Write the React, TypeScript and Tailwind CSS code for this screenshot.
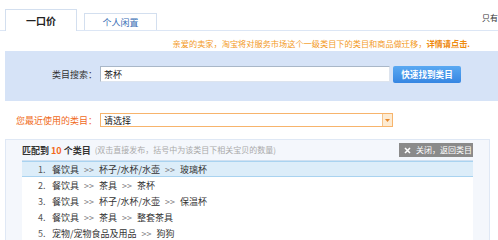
const rows = [
  ['餐饮具', '杯子/水杯/水壶', '玻璃杯'],
  ['餐饮具', '茶具', '茶杯'],
  ['餐饮具', '杯子/水杯/水壶', '保温杯'],
  ['餐饮具', '茶具', '整套茶具'],
  ['宠物/宠物食品及用品', '狗狗'],
];

export default function App() {
  return (
    <div
      className="relative h-[240px] w-[498px] overflow-hidden bg-white text-[9px] leading-none text-[#333]"
      style={{ fontFamily: '"Noto Sans CJK SC", "Noto Sans", sans-serif' }}
    >
      {/* tabs */}
      <div className="flex h-[31px] items-end border-b border-[#dce6f5] pl-[5px]">
        <div className="-mb-px flex h-[22px] w-[72px] items-center justify-center border border-b-0 border-[#d3dfef] bg-white text-[10px] font-bold text-[#222]">
          一口价
        </div>
        <div className="ml-[7px] flex h-[17px] w-[73px] items-center justify-center border border-b-0 border-[#d3dfef] bg-white text-[#3a6fb5]">
          个人闲置
        </div>
        <div className="ml-auto mb-[8px] whitespace-nowrap text-[8px] text-[#333]">只有</div>
      </div>

      {/* notice */}
      <div className="mt-[4px] flex h-[16px] items-center justify-end pr-[28px] text-[8.2px] text-[#f39a1e]">
        亲爱的卖家，淘宝将对服务市场这个一级类目下的类目和商品做迁移，
        <span className="font-bold text-[#ee8a10]">详情请点击.</span>
      </div>

      {/* search */}
      <div className="ml-[5px] flex h-[50px] items-start bg-[#d6e3f7] pt-[15px]">
        <div className="flex h-[16px] w-[95px] items-center justify-end pr-[3px] text-[#333]">类目搜索：</div>
        <div className="flex h-[16px] w-[290px] items-center border border-[#a9b7c8] border-b-[#dde4ee] border-r-[#dde4ee] bg-white pl-[3px] text-[#222]">
          茶杯
        </div>
        <div className="ml-[3px] flex h-[17px] w-[68px] items-center justify-center rounded-[2px] bg-gradient-to-b from-[#5aa9f2] to-[#3686e2] text-[8.6px] font-bold text-white">
          快速找到类目
        </div>
      </div>

      {/* recent */}
      <div className="flex h-[38px] items-center">
        <div className="flex w-[100px] justify-end pr-[3px] text-[#f06a22]">您最近使用的类目：</div>
        <div className="flex h-[14px] w-[293px] items-center justify-between border border-[#f7b46c] bg-white pl-[3px] text-[#222]">
          请选择
          <div className="flex h-[12px] w-[10px] items-center justify-center border-l border-[#f7c48a] bg-[#fdebd2]">
            <svg width="5" height="3" viewBox="0 0 5 3">
              <path d="M0 0h5L2.5 3z" fill="#e8892b" />
            </svg>
          </div>
        </div>
      </div>

      {/* results */}
      <div className="ml-[5px] h-[110px] w-[485px] border border-[#dfe8f5] bg-[#f4f7fc]">
        <div className="flex h-[20px] items-center justify-between pl-[16px] pr-[16px]">
          <div className="flex items-center">
            <span className="font-bold text-[#333]">匹配到</span>
            <span className="mx-[2px] font-bold text-[#f26a1c]">10</span>
            <span className="font-bold text-[#333]">个类目</span>
            <span className="ml-[4px] text-[8px] text-[#aaa]">(双击直接发布，括号中为该类目下相关宝贝的数量)</span>
          </div>
          <div className="flex h-[14px] w-[74px] items-center gap-[5px] whitespace-nowrap bg-[#8a8a8a] pl-[5px] text-[8px] text-white">
            <svg width="7" height="7" viewBox="0 0 7 7">
              <path d="M1 1l5 5M6 1L1 6" stroke="#fff" strokeWidth="1.6" />
            </svg>
            关闭，返回类目
          </div>
        </div>
        <div className="mx-[16px] border-t border-[#cfe0f1] bg-white">
          {rows.map((r, i) => (
            <div
              key={i}
              className={`flex h-[16px] items-center pl-[16px] ${
                i === 0 ? 'border-y border-[#a9d3f0] bg-[#dcedf9]' : ''
              }`}
            >
              <span className="w-[14px] text-[#555]">{i + 1}.</span>
              {r.map((t, j) => (
                <span key={j} className="flex items-center">
                  {j > 0 && <span className="mx-[5px] text-[#777]">&gt;&gt;</span>}
                  <span className="text-[#333]">{t}</span>
                </span>
              ))}
            </div>
          ))}
        </div>
      </div>
    </div>
  );
}
